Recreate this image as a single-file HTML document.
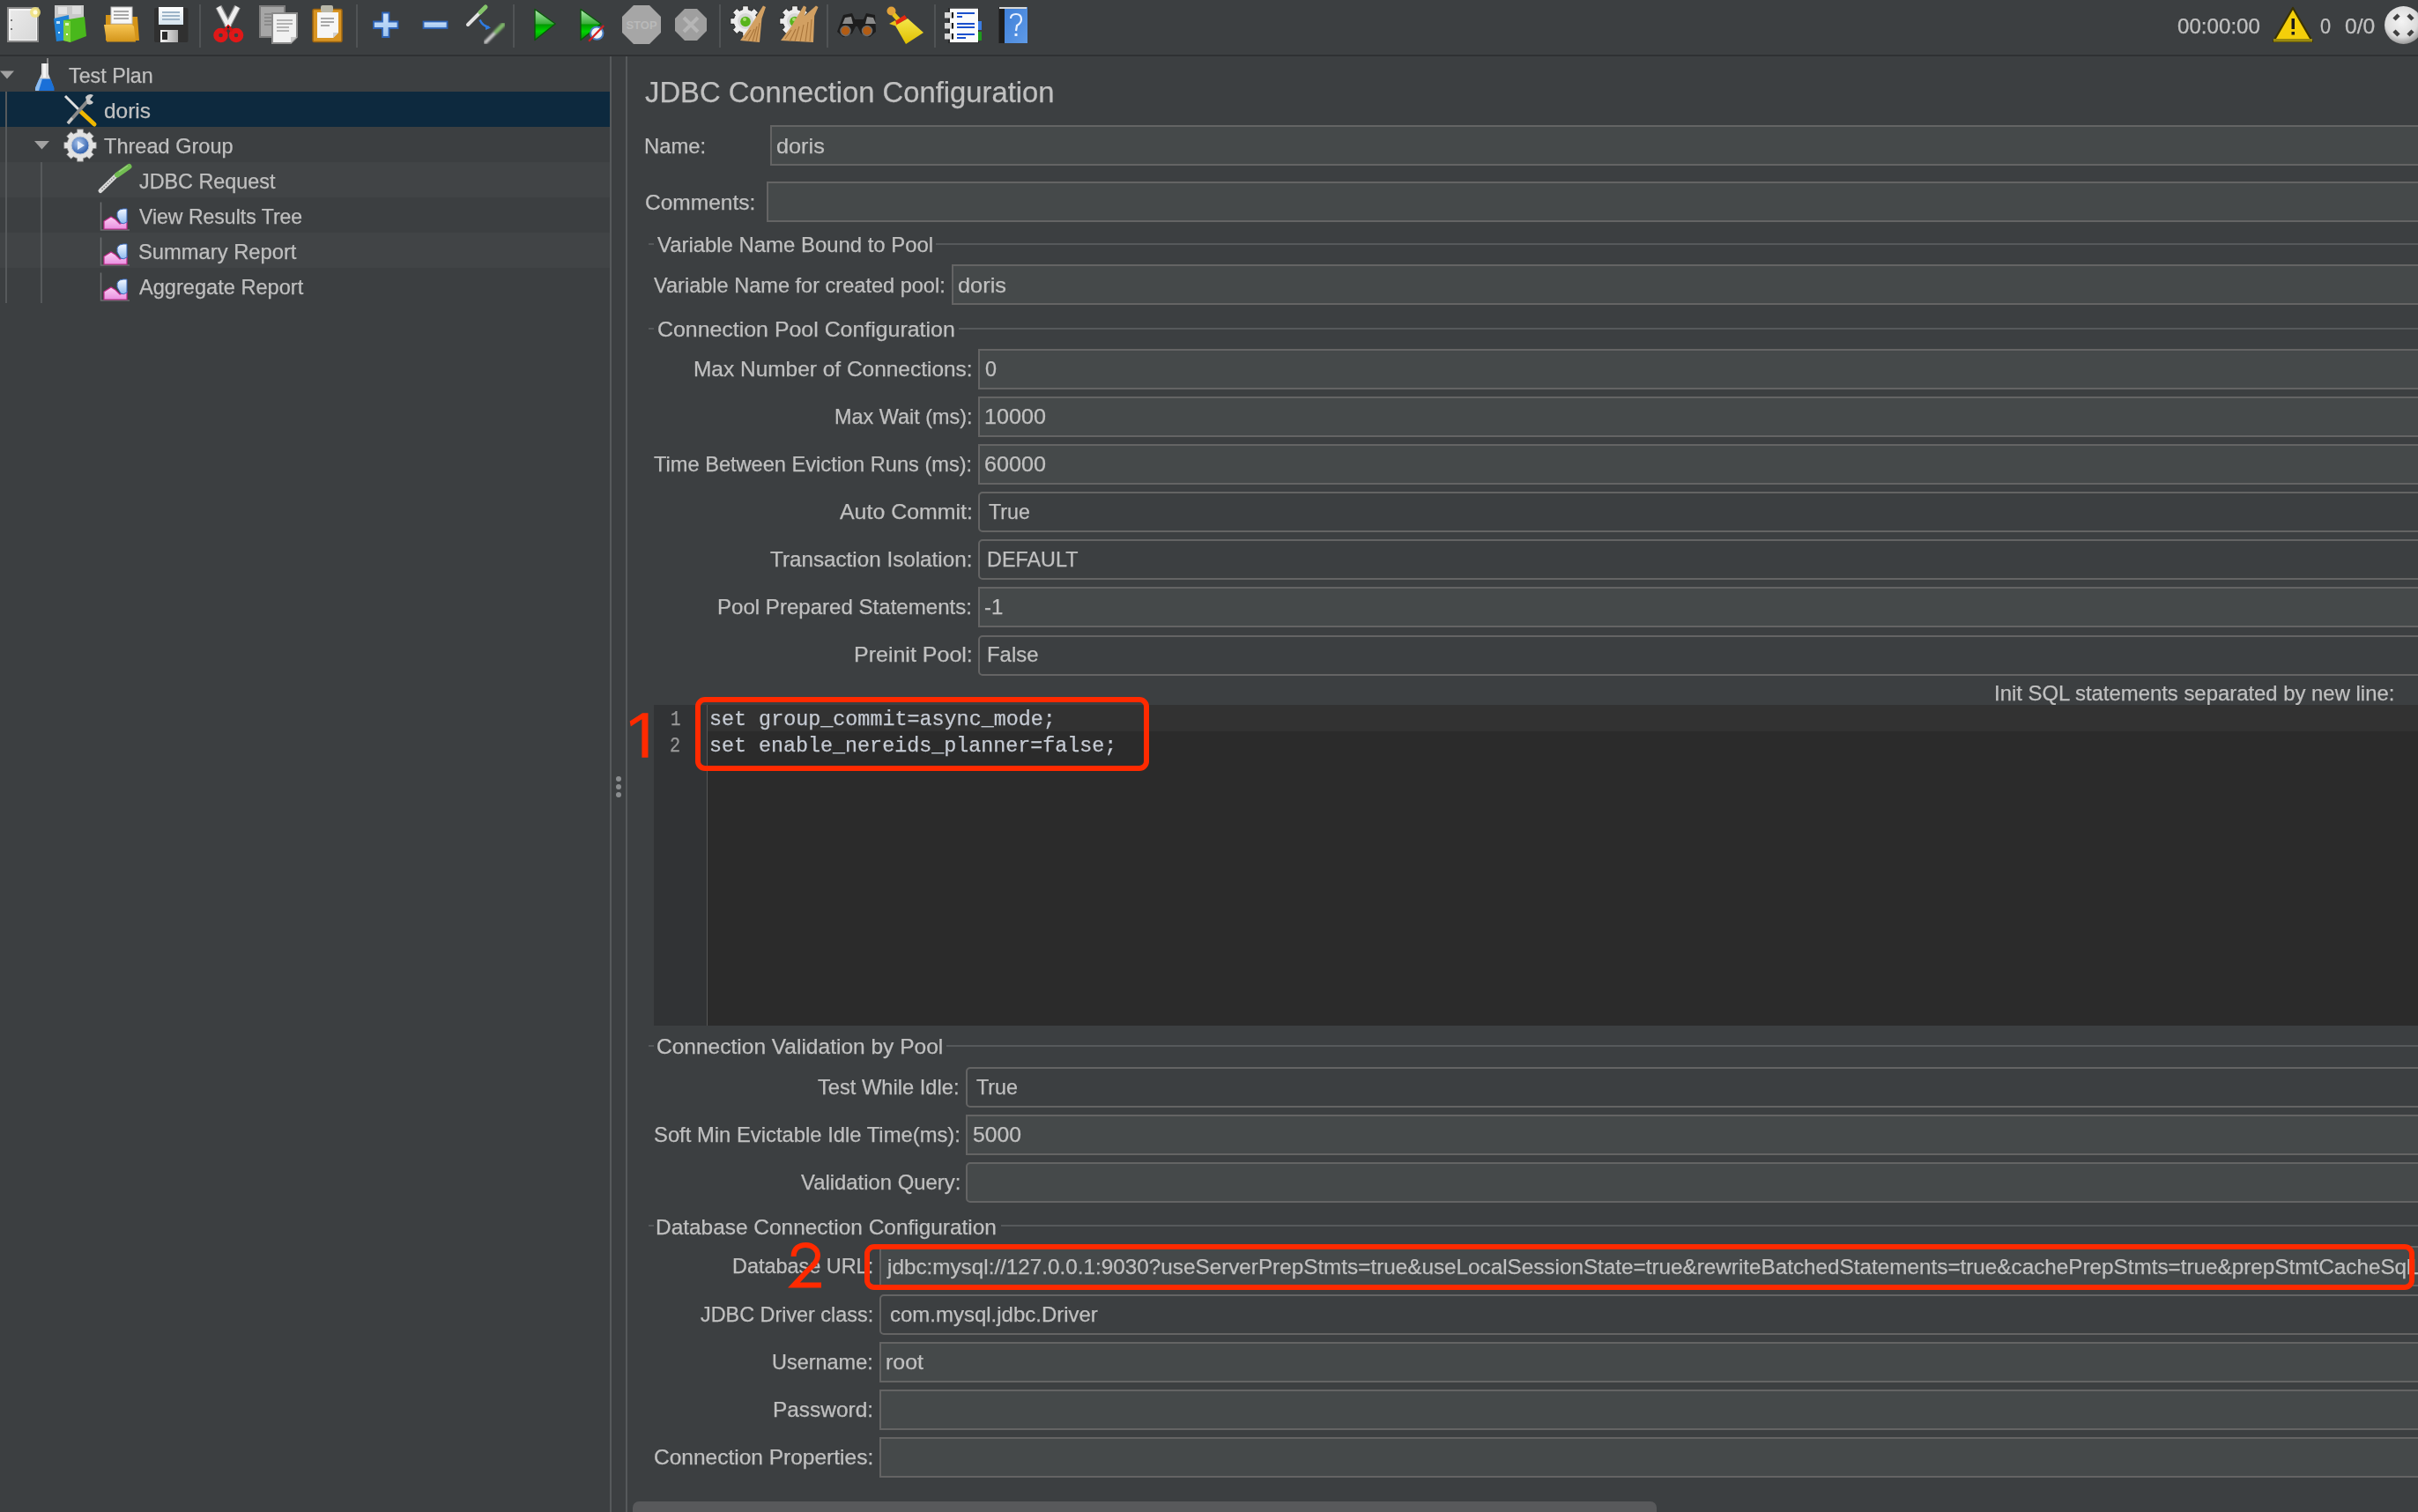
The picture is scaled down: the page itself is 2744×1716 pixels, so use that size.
<!DOCTYPE html>
<html><head><meta charset="utf-8"><style>
html,body{margin:0;padding:0;}
body{width:2744px;height:1716px;background:#3c3f41;overflow:hidden;position:relative;font-family:"Liberation Sans",sans-serif;}
.t{position:absolute;white-space:pre;-webkit-text-stroke:0.25px currentColor;}
.r{position:absolute;}
svg{position:absolute;overflow:visible;}
</style></head><body>
<div class="r" style="left:0px;top:62px;width:2744px;height:2px;background:#2f3133"></div><div class="r" style="left:226px;top:5px;width:2px;height:49px;background:#505355"></div><div class="r" style="left:404px;top:5px;width:2px;height:49px;background:#505355"></div><div class="r" style="left:582px;top:5px;width:2px;height:49px;background:#505355"></div><div class="r" style="left:816px;top:5px;width:2px;height:49px;background:#505355"></div><div class="r" style="left:938px;top:5px;width:2px;height:49px;background:#505355"></div><div class="r" style="left:1060px;top:5px;width:2px;height:49px;background:#505355"></div><div class="r" style="left:0px;top:104px;width:692px;height:40px;background:#0d293e"></div><div class="r" style="left:0px;top:184px;width:692px;height:40px;background:#414446"></div><div class="r" style="left:0px;top:264px;width:692px;height:40px;background:#414446"></div><div class="r" style="left:6px;top:104px;width:2px;height:240px;background:#56595b"></div><div class="r" style="left:46px;top:184px;width:2px;height:160px;background:#56595b"></div><div class="r" style="left:692px;top:64px;width:2px;height:1652px;background:#56595b"></div><div class="r" style="left:710px;top:64px;width:2px;height:1652px;background:#56595b"></div><div class="r" style="left:699px;top:881px;width:6px;height:6px;background:#8a8d8f;border-radius:3px"></div><div class="r" style="left:699px;top:890px;width:6px;height:6px;background:#8a8d8f;border-radius:3px"></div><div class="r" style="left:699px;top:899px;width:6px;height:6px;background:#8a8d8f;border-radius:3px"></div><div class="t" style="left:78.00px;top:74.06px;font-size:24.5px;line-height:24.5px;color:#c0c0c0;font-family:'Liberation Sans';transform:scaleX(0.9496);transform-origin:0 0;">Test Plan</div><div class="t" style="left:118.00px;top:114.06px;font-size:24.5px;line-height:24.5px;color:#c0c0c0;font-family:'Liberation Sans';transform:scaleX(0.9990);transform-origin:0 0;">doris</div><div class="t" style="left:118.00px;top:154.06px;font-size:24.5px;line-height:24.5px;color:#c0c0c0;font-family:'Liberation Sans';transform:scaleX(0.9612);transform-origin:0 0;">Thread Group</div><div class="t" style="left:158.10px;top:194.06px;font-size:24.5px;line-height:24.5px;color:#c0c0c0;font-family:'Liberation Sans';transform:scaleX(0.9530);transform-origin:0 0;">JDBC Request</div><div class="t" style="left:158.10px;top:234.06px;font-size:24.5px;line-height:24.5px;color:#c0c0c0;font-family:'Liberation Sans';transform:scaleX(0.9400);transform-origin:0 0;">View Results Tree</div><div class="t" style="left:157.13px;top:274.06px;font-size:24.5px;line-height:24.5px;color:#c0c0c0;font-family:'Liberation Sans';transform:scaleX(0.9688);transform-origin:0 0;">Summary Report</div><div class="t" style="left:158.10px;top:314.06px;font-size:24.5px;line-height:24.5px;color:#c0c0c0;font-family:'Liberation Sans';transform:scaleX(0.9628);transform-origin:0 0;">Aggregate Report</div><div class="t" style="left:732.00px;top:87.72px;font-size:33.4px;line-height:33.4px;color:#c0c0c0;font-family:'Liberation Sans';transform:scaleX(0.9815);transform-origin:0 0;">JDBC Connection Configuration</div><div class="t" style="left:731.05px;top:154.06px;font-size:24.5px;line-height:24.5px;color:#c0c0c0;font-family:'Liberation Sans';transform:scaleX(0.9729);transform-origin:0 0;">Name:</div><div class="r" style="left:874px;top:142px;width:1890px;height:42px;border:2px solid #646464;background:#45494a;"></div><div class="t" style="left:880.97px;top:154.06px;font-size:24.5px;line-height:24.5px;color:#c0c0c0;font-family:'Liberation Sans';transform:scaleX(1.0318);transform-origin:0 0;">doris</div><div class="t" style="left:732.00px;top:218.06px;font-size:24.5px;line-height:24.5px;color:#c0c0c0;font-family:'Liberation Sans';transform:scaleX(1.0013);transform-origin:0 0;">Comments:</div><div class="r" style="left:870px;top:206px;width:1894px;height:42px;border:2px solid #646464;background:#45494a;"></div><div class="r" style="left:736px;top:276px;width:6px;height:2px;background:#56595b"></div><div class="t" style="left:746.00px;top:265.56px;font-size:24.5px;line-height:24.5px;color:#c0c0c0;font-family:'Liberation Sans';transform:scaleX(0.9755);transform-origin:0 0;">Variable Name Bound to Pool</div><div class="r" style="left:1062px;top:276px;width:1682px;height:2px;background:#56595b"></div><div class="t" style="left:742.00px;top:312.06px;font-size:24.5px;line-height:24.5px;color:#c0c0c0;font-family:'Liberation Sans';transform:scaleX(0.9612);transform-origin:0 0;">Variable Name for created pool:</div><div class="r" style="left:1080px;top:300px;width:1684px;height:42px;border:2px solid #646464;background:#45494a;"></div><div class="t" style="left:1086.96px;top:311.66px;font-size:24.5px;line-height:24.5px;color:#c0c0c0;font-family:'Liberation Sans';transform:scaleX(1.0356);transform-origin:0 0;">doris</div><div class="r" style="left:736px;top:372px;width:6px;height:2px;background:#56595b"></div><div class="t" style="left:745.58px;top:362.06px;font-size:24.5px;line-height:24.5px;color:#c0c0c0;font-family:'Liberation Sans';transform:scaleX(1.0163);transform-origin:0 0;">Connection Pool Configuration</div><div class="r" style="left:1088px;top:372px;width:1656px;height:2px;background:#56595b"></div><div class="t" style="left:786.80px;top:406.96px;font-size:24.5px;line-height:24.5px;color:#c0c0c0;font-family:'Liberation Sans';transform:scaleX(0.9979);transform-origin:0 0;">Max Number of Connections:</div><div class="r" style="left:1110px;top:396px;width:1654px;height:42px;border:2px solid #646464;background:#45494a;"></div><div class="t" style="left:1118.30px;top:406.96px;font-size:24.5px;line-height:24.5px;color:#c0c0c0;font-family:'Liberation Sans';transform:scaleX(0.9538);transform-origin:0 0;">0</div><div class="t" style="left:946.89px;top:460.99px;font-size:24.5px;line-height:24.5px;color:#c0c0c0;font-family:'Liberation Sans';transform:scaleX(0.9552);transform-origin:0 0;">Max Wait (ms):</div><div class="r" style="left:1110px;top:450px;width:1654px;height:42px;border:2px solid #646464;background:#45494a;"></div><div class="t" style="left:1117.27px;top:460.99px;font-size:24.5px;line-height:24.5px;color:#c0c0c0;font-family:'Liberation Sans';transform:scaleX(1.0270);transform-origin:0 0;">10000</div><div class="t" style="left:742.20px;top:515.02px;font-size:24.5px;line-height:24.5px;color:#c0c0c0;font-family:'Liberation Sans';transform:scaleX(0.9634);transform-origin:0 0;">Time Between Eviction Runs (ms):</div><div class="r" style="left:1110px;top:504px;width:1654px;height:42px;border:2px solid #646464;background:#45494a;"></div><div class="t" style="left:1117.27px;top:515.02px;font-size:24.5px;line-height:24.5px;color:#c0c0c0;font-family:'Liberation Sans';transform:scaleX(1.0270);transform-origin:0 0;">60000</div><div class="t" style="left:952.60px;top:569.05px;font-size:24.5px;line-height:24.5px;color:#c0c0c0;font-family:'Liberation Sans';transform:scaleX(1.0164);transform-origin:0 0;">Auto Commit:</div><div class="r" style="left:1110px;top:558px;width:1654px;height:42px;border:2px solid #646464;background:#3c3f41;border-radius:5px 0 0 5px;"></div><div class="t" style="left:1122.30px;top:569.05px;font-size:24.5px;line-height:24.5px;color:#c0c0c0;font-family:'Liberation Sans';transform:scaleX(0.9480);transform-origin:0 0;">True</div><div class="t" style="left:874.00px;top:623.08px;font-size:24.5px;line-height:24.5px;color:#c0c0c0;font-family:'Liberation Sans';transform:scaleX(0.9889);transform-origin:0 0;">Transaction Isolation:</div><div class="r" style="left:1110px;top:612px;width:1654px;height:42px;border:2px solid #646464;background:#3c3f41;border-radius:5px 0 0 5px;"></div><div class="t" style="left:1120.39px;top:623.08px;font-size:24.5px;line-height:24.5px;color:#c0c0c0;font-family:'Liberation Sans';transform:scaleX(0.9541);transform-origin:0 0;">DEFAULT</div><div class="t" style="left:814.44px;top:677.11px;font-size:24.5px;line-height:24.5px;color:#c0c0c0;font-family:'Liberation Sans';transform:scaleX(0.9822);transform-origin:0 0;">Pool Prepared Statements:</div><div class="r" style="left:1110px;top:666px;width:1654px;height:42px;border:2px solid #646464;background:#45494a;"></div><div class="t" style="left:1117.32px;top:677.11px;font-size:24.5px;line-height:24.5px;color:#c0c0c0;font-family:'Liberation Sans';transform:scaleX(0.9772);transform-origin:0 0;">-1</div><div class="t" style="left:968.66px;top:731.14px;font-size:24.5px;line-height:24.5px;color:#c0c0c0;font-family:'Liberation Sans';transform:scaleX(1.0204);transform-origin:0 0;">Preinit Pool:</div><div class="r" style="left:1110px;top:721px;width:1654px;height:42px;border:2px solid #646464;background:#3c3f41;border-radius:5px 0 0 5px;"></div><div class="t" style="left:1120.35px;top:731.14px;font-size:24.5px;line-height:24.5px;color:#c0c0c0;font-family:'Liberation Sans';transform:scaleX(0.9758);transform-origin:0 0;">False</div><div class="t" style="left:2263.05px;top:774.66px;font-size:24.5px;line-height:24.5px;color:#c0c0c0;font-family:'Liberation Sans';transform:scaleX(0.9745);transform-origin:0 0;">Init SQL statements separated by new line:</div><div class="r" style="left:742px;top:800px;width:2002px;height:364px;background:#2b2b2b"></div><div class="r" style="left:742px;top:800px;width:60px;height:364px;background:#313335"></div><div class="r" style="left:803px;top:800px;width:1941px;height:30px;background:#323232"></div><div class="r" style="left:802px;top:800px;width:1px;height:364px;background:#555555"></div><div class="t" style="left:760.67px;top:806.30px;font-size:23.1px;line-height:23.1px;color:#999999;font-family:'Liberation Mono';transform:scaleX(0.8333);transform-origin:0 0;">1</div><div class="t" style="left:760.12px;top:836.30px;font-size:23.1px;line-height:23.1px;color:#999999;font-family:'Liberation Mono';transform:scaleX(0.8750);transform-origin:0 0;">2</div><div class="t" style="left:804.59px;top:806.30px;font-size:23.1px;line-height:23.1px;color:#c5cad3;font-family:'Liberation Mono';transform:scaleX(1.0124);transform-origin:0 0;">set group_commit=async_mode;</div><div class="t" style="left:804.59px;top:836.30px;font-size:23.1px;line-height:23.1px;color:#c5cad3;font-family:'Liberation Mono';transform:scaleX(1.0109);transform-origin:0 0;">set enable_nereids_planner=false;</div><div class="r" style="left:736px;top:1186px;width:6px;height:2px;background:#56595b"></div><div class="t" style="left:745.20px;top:1176.06px;font-size:24.5px;line-height:24.5px;color:#c0c0c0;font-family:'Liberation Sans';transform:scaleX(1.0005);transform-origin:0 0;">Connection Validation by Pool</div><div class="r" style="left:1074px;top:1186px;width:1670px;height:2px;background:#56595b"></div><div class="t" style="left:928.20px;top:1222.36px;font-size:24.5px;line-height:24.5px;color:#c0c0c0;font-family:'Liberation Sans';transform:scaleX(0.9665);transform-origin:0 0;">Test While Idle:</div><div class="r" style="left:1096px;top:1211px;width:1668px;height:42px;border:2px solid #646464;background:#3c3f41;border-radius:5px 0 0 5px;"></div><div class="t" style="left:1107.90px;top:1222.36px;font-size:24.5px;line-height:24.5px;color:#c0c0c0;font-family:'Liberation Sans';transform:scaleX(0.9500);transform-origin:0 0;">True</div><div class="t" style="left:741.63px;top:1276.36px;font-size:24.5px;line-height:24.5px;color:#c0c0c0;font-family:'Liberation Sans';transform:scaleX(0.9716);transform-origin:0 0;">Soft Min Evictable Idle Time(ms):</div><div class="r" style="left:1096px;top:1265px;width:1668px;height:42px;border:2px solid #646464;background:#45494a;"></div><div class="t" style="left:1104.20px;top:1276.36px;font-size:24.5px;line-height:24.5px;color:#c0c0c0;font-family:'Liberation Sans';transform:scaleX(1.0097);transform-origin:0 0;">5000</div><div class="t" style="left:908.70px;top:1330.36px;font-size:24.5px;line-height:24.5px;color:#c0c0c0;font-family:'Liberation Sans';transform:scaleX(0.9739);transform-origin:0 0;">Validation Query:</div><div class="r" style="left:1096px;top:1319px;width:1668px;height:42px;border:2px solid #646464;background:#45494a;border-radius:5px 0 0 5px;"></div><div class="r" style="left:736px;top:1390px;width:6px;height:2px;background:#56595b"></div><div class="t" style="left:744.21px;top:1381.06px;font-size:24.5px;line-height:24.5px;color:#c0c0c0;font-family:'Liberation Sans';transform:scaleX(0.9968);transform-origin:0 0;">Database Connection Configuration</div><div class="r" style="left:1136px;top:1390px;width:1608px;height:2px;background:#56595b"></div><div class="t" style="left:830.59px;top:1425.36px;font-size:24.5px;line-height:24.5px;color:#c0c0c0;font-family:'Liberation Sans';transform:scaleX(0.9560);transform-origin:0 0;">Database URL:</div><div class="r" style="left:998px;top:1414px;width:1766px;height:42px;border:2px solid #646464;background:#45494a;"></div><div class="t" style="left:794.60px;top:1480.36px;font-size:24.5px;line-height:24.5px;color:#c0c0c0;font-family:'Liberation Sans';transform:scaleX(0.9542);transform-origin:0 0;">JDBC Driver class:</div><div class="r" style="left:998px;top:1469px;width:1766px;height:42px;border:2px solid #646464;background:#3c3f41;border-radius:5px 0 0 5px;"></div><div class="t" style="left:1009.62px;top:1480.36px;font-size:24.5px;line-height:24.5px;color:#c0c0c0;font-family:'Liberation Sans';transform:scaleX(0.9787);transform-origin:0 0;">com.mysql.jdbc.Driver</div><div class="t" style="left:876.04px;top:1534.36px;font-size:24.5px;line-height:24.5px;color:#c0c0c0;font-family:'Liberation Sans';transform:scaleX(0.9572);transform-origin:0 0;">Username:</div><div class="r" style="left:998px;top:1523px;width:1766px;height:42px;border:2px solid #646464;background:#45494a;"></div><div class="t" style="left:1005.38px;top:1534.36px;font-size:24.5px;line-height:24.5px;color:#c0c0c0;font-family:'Liberation Sans';transform:scaleX(1.0167);transform-origin:0 0;">root</div><div class="t" style="left:876.81px;top:1588.36px;font-size:24.5px;line-height:24.5px;color:#c0c0c0;font-family:'Liberation Sans';transform:scaleX(0.9967);transform-origin:0 0;">Password:</div><div class="r" style="left:998px;top:1577px;width:1766px;height:42px;border:2px solid #646464;background:#45494a;"></div><div class="t" style="left:741.60px;top:1642.36px;font-size:24.5px;line-height:24.5px;color:#c0c0c0;font-family:'Liberation Sans';transform:scaleX(0.9999);transform-origin:0 0;">Connection Properties:</div><div class="r" style="left:998px;top:1631px;width:1766px;height:42px;border:2px solid #646464;background:#45494a;"></div><div class="t" style="left:1007.39px;top:1425.86px;font-size:24.5px;line-height:24.5px;color:#c0c0c0;font-family:'Liberation Sans';transform:scaleX(0.9906);transform-origin:0 0;">jdbc:mysql://127.0.0.1:9030?useServerPrepStmts=true&amp;useLocalSessionState=true&amp;rewriteBatchedStatements=true&amp;cachePrepStmts=true&amp;prepStmtCacheSql</div><div class="t" style="left:2735.60px;top:1425.86px;font-size:24.5px;line-height:24.5px;color:#c0c0c0;font-family:'Liberation Sans';transform:scaleX(1.0000);transform-origin:0 0;">Limit=99999</div><div class="r" style="left:718px;top:1704px;width:1161.5px;height:30px;background:#58595b;border-radius:7px"></div><div class="r" style="left:789px;top:790.6px;width:503.3px;height:72px;border:6px solid #ff2a00;border-radius:11px"></div><div class="r" style="left:981.4px;top:1411.5px;width:1747px;height:40.2px;border:6px solid #ff2a00;border-radius:11px"></div><svg width="2744" height="1716" style="left:0;top:0"><path d="M735.5,809.2 L735.5,859.8 L728.4,859.8 L728.4,816.3 L715.8,824.5 L714.7,818.5 L729.1,809.2 Z" fill="#ff2a00"/><path d="M900.6,1426 C900.6,1417 906.5,1413 914.5,1413 C922.5,1413 928,1418.5 928,1425 C928,1431 924,1435.5 917.5,1441 L901,1458.5 L932,1458.5" fill="none" stroke="#ff2a00" stroke-width="6"/></svg><div class="t" style="left:2470.80px;top:18.08px;font-size:24px;line-height:24px;color:#c0c0c0;font-family:'Liberation Sans';transform:scaleX(1.0056);transform-origin:0 0;">00:00:00</div><div class="t" style="left:2633.00px;top:18.08px;font-size:24px;line-height:24px;color:#c0c0c0;font-family:'Liberation Sans';transform:scaleX(0.9077);transform-origin:0 0;">0</div><div class="t" style="left:2660.60px;top:18.08px;font-size:24px;line-height:24px;color:#c0c0c0;font-family:'Liberation Sans';transform:scaleX(1.0268);transform-origin:0 0;">0/0</div>
<svg width="2744" height="400" viewBox="0 0 2744 400" style="left:0;top:0">
<defs>
<linearGradient id="gNew" x1="0" y1="0" x2="1" y2="1"><stop offset="0" stop-color="#e9e9e9"/><stop offset="1" stop-color="#d9d9d9"/></linearGradient>
<linearGradient id="gFold" x1="0" y1="0" x2="0" y2="1"><stop offset="0" stop-color="#f6c453"/><stop offset="1" stop-color="#d3951a"/></linearGradient>
<linearGradient id="gPlay" x1="0" y1="0" x2="0" y2="1"><stop offset="0.05" stop-color="#a6e6a6"/><stop offset="0.47" stop-color="#3aae3a"/><stop offset="0.5" stop-color="#009a00"/><stop offset="0.72" stop-color="#00d400"/><stop offset="1" stop-color="#0a8a0a"/></linearGradient>
<linearGradient id="gBlue" x1="0" y1="0" x2="0" y2="1"><stop offset="0" stop-color="#cfe3fb"/><stop offset="1" stop-color="#9cc3f0"/></linearGradient>
<linearGradient id="gFloppy" x1="0" y1="0" x2="0" y2="1"><stop offset="0" stop-color="#ffffff"/><stop offset="1" stop-color="#d6e4ee"/></linearGradient>
<linearGradient id="gShut" x1="0" y1="0" x2="1" y2="0"><stop offset="0" stop-color="#f4f4f4"/><stop offset="1" stop-color="#a8a8a8"/></linearGradient>
<linearGradient id="gBroom" x1="0" y1="0" x2="0" y2="1"><stop offset="0" stop-color="#f5e64a"/><stop offset="1" stop-color="#e0c000"/></linearGradient>
<linearGradient id="gHelp" x1="0" y1="0" x2="1" y2="1"><stop offset="0" stop-color="#3e7fd8"/><stop offset="1" stop-color="#5f9ae6"/></linearGradient>
<radialGradient id="gBall" cx="0.45" cy="0.4" r="0.6"><stop offset="0" stop-color="#f4f4f4"/><stop offset="0.7" stop-color="#dcdcdc"/><stop offset="1" stop-color="#9a9a9a"/></radialGradient>
<radialGradient id="gGearBlue" cx="0.4" cy="0.35" r="0.7"><stop offset="0" stop-color="#a9c4ea"/><stop offset="1" stop-color="#2456a8"/></radialGradient>
<linearGradient id="gPink" x1="0" y1="0" x2="0" y2="1"><stop offset="0" stop-color="#fbd0f4"/><stop offset="1" stop-color="#e98fe0"/></linearGradient>
<linearGradient id="gBar" x1="0" y1="0" x2="0" y2="1"><stop offset="0" stop-color="#f4f8ff"/><stop offset="1" stop-color="#8fbaf0"/></linearGradient>
<filter id="blur1"><feGaussianBlur stdDeviation="1.2"/></filter>
</defs>

<!-- 1 New -->
<rect x="9" y="9" width="34" height="38" fill="#f6f6f6" stroke="#8a8a8a" stroke-width="2"/>
<rect x="12" y="12" width="29" height="33" fill="url(#gNew)"/>
<rect x="12" y="22" width="2" height="2" fill="#777"/><rect x="12" y="32" width="2" height="2" fill="#777"/>
<circle cx="40" cy="14" r="6" fill="#f3e37a" opacity="0.85"/><circle cx="40" cy="14" r="2.5" fill="#fffbe0"/>

<!-- 2 Templates -->
<rect x="62" y="6" width="33" height="20" fill="#c9c9c9"/>
<rect x="66" y="8" width="10" height="8" fill="#e3e3e3"/><rect x="82" y="7" width="10" height="9" fill="#dcdcdc"/>
<path d="M61,21 L78,17 L80,45 L64,47 Z" fill="#1f82d6"/>
<rect x="64" y="24" width="4" height="3" fill="#bfe0f8"/><rect x="66" y="36" width="2" height="2" fill="#d0ecff"/>
<path d="M72,23 L96,19 L98,41 L80,48 L72,46 Z" fill="#49b81c"/>
<path d="M72,23 L80,24 L80,48 L72,46 Z" fill="#7fd33a"/>
<rect x="74" y="26" width="4" height="3" fill="#d8f5c0"/><rect x="75" y="38" width="2" height="2" fill="#fff"/>

<!-- 3 Open -->
<path d="M120,17 L133,17 L135,19 L156,19 L158,46 L120,46 Z" fill="#d49418"/>
<rect x="126" y="8" width="24" height="19" fill="#f7f7f7" stroke="#bdbdbd" stroke-width="1"/>
<rect x="129" y="12" width="17" height="2" fill="#a8a8a8"/><rect x="129" y="16" width="17" height="2" fill="#a8a8a8"/><rect x="129" y="20" width="17" height="2" fill="#a8a8a8"/>
<path d="M118,28 L150,28 L152,30 L154,47.5 L121,47.5 Z" fill="url(#gFold)"/>

<!-- 4 Save -->
<rect x="175" y="9" width="38.5" height="39" rx="2" fill="#303030"/>
<rect x="180" y="8" width="28" height="20" fill="url(#gFloppy)"/>
<rect x="184" y="13" width="20" height="2" fill="#9db4c8"/><rect x="184" y="17" width="20" height="2" fill="#9db4c8"/><rect x="184" y="21" width="20" height="2" fill="#9db4c8"/>
<rect x="182" y="34" width="20" height="14" fill="url(#gShut)"/>
<rect x="184" y="36" width="6" height="9" fill="#2a2a2a"/>

<!-- 5 Cut -->
<path d="M248,7.5 L260,31" stroke="#8f8f8f" stroke-width="7.5" stroke-linecap="butt"/>
<path d="M269.5,7.5 L257.5,31" stroke="#8f8f8f" stroke-width="7.5" stroke-linecap="butt"/>
<path d="M248,8 L260,31" stroke="#eeeeee" stroke-width="5"/>
<path d="M269.5,8 L257.5,31" stroke="#eeeeee" stroke-width="5"/>
<circle cx="250.5" cy="40" r="5.3" fill="#3c3f41" stroke="#e01818" stroke-width="6"/>
<circle cx="268" cy="40" r="5.3" fill="#3c3f41" stroke="#e01818" stroke-width="6"/>
<path d="M254.5,35 L259,30 L263.5,35" stroke="#d41414" stroke-width="3.5" fill="none"/>
<circle cx="259" cy="31" r="1.2" fill="#222"/>
<!-- 6 Copy -->
<rect x="295" y="7" width="28" height="35" fill="#a6a6a6" stroke="#7c7c7c" stroke-width="2"/>
<rect x="300" y="15" width="12" height="2" fill="#8a8a8a"/><rect x="300" y="19" width="12" height="2" fill="#8a8a8a"/><rect x="300" y="23" width="12" height="2" fill="#8a8a8a"/><rect x="300" y="27" width="12" height="2" fill="#8a8a8a"/>
<path d="M309,15 L337,15 L337,42 L330,49 L309,49 Z" fill="#f1f1f1" stroke="#8a8a8a" stroke-width="2"/>
<path d="M330,49 L330,42 L337,42 Z" fill="#c8c8c8"/>
<rect x="314" y="22" width="18" height="2" fill="#b4b4b4"/><rect x="314" y="26" width="18" height="2" fill="#b4b4b4"/><rect x="314" y="30" width="14" height="2" fill="#b4b4b4"/><rect x="314" y="34" width="14" height="2" fill="#b4b4b4"/>

<!-- 7 Paste -->
<rect x="355" y="10.5" width="33" height="37" rx="1.5" fill="#d89422" stroke="#9c6410" stroke-width="1.5"/>
<path d="M360,14 L384,14 L384,37 L378,43 L360,43 Z" fill="#f6f6f6"/>
<path d="M378,43 L378,37 L384,37 Z" fill="#d0d0d0"/>
<rect x="364" y="6" width="14" height="8" rx="2" fill="#b9b7a8"/>
<rect x="364" y="20" width="15" height="2" fill="#a8a8a8"/><rect x="364" y="24" width="15" height="2" fill="#a8a8a8"/><rect x="364" y="28" width="10" height="2" fill="#a8a8a8"/>

<!-- 8 Plus -->
<path d="M434,14.5 h7.5 v10 h10 v7.5 h-10 v10 h-7.5 v-10 h-10 v-7.5 h10 z" fill="url(#gBlue)" stroke="#2e64b8" stroke-width="1.8"/>

<!-- 9 Minus -->
<rect x="480.5" y="24.5" width="27" height="7.5" fill="url(#gBlue)" stroke="#2e64b8" stroke-width="1.8"/>

<!-- 10 Toggle -->
<path d="M531,28 L545,14" stroke="#e2e2e2" stroke-width="4" stroke-linecap="round"/>
<path d="M545,14 L551,8" stroke="#84c46a" stroke-width="5" stroke-linecap="round"/>
<path d="M544.5,22.5 Q548,30 555,31" stroke="#2f7be0" stroke-width="2.5" fill="none"/>
<path d="M551,28 L557,31.5 L551,34 Z" fill="#2f7be0"/>
<g filter="url(#blur1)"><path d="M551,48 L563,36" stroke="#c8c8c8" stroke-width="4" stroke-linecap="round"/><path d="M563,36 L571,28" stroke="#7fb86a" stroke-width="5" stroke-linecap="round"/></g>

<!-- 11 Play -->
<path d="M607,10.5 L630.2,27 L607,45.5 Z" fill="url(#gPlay)" stroke="#0a560a" stroke-width="1.4" stroke-linejoin="round"/>

<!-- 12 Play no timers -->
<path d="M659,10.5 L682,27 L659,45.5 Z" fill="url(#gPlay)" stroke="#0a560a" stroke-width="1.4" stroke-linejoin="round"/>
<circle cx="677.3" cy="37.6" r="7.2" fill="#eef3f8" stroke="#4a7fc4" stroke-width="2"/>
<path d="M668.2,46.7 L685.2,28.9" stroke="#d42020" stroke-width="2.2"/>

<!-- 13 Stop -->
<path d="M719,6 L737,6 L750,19 L750,37 L737,50 L719,50 L706,37 L706,19 Z" fill="#a6a6a6"/>
<text x="728" y="33" font-family="Liberation Sans" font-weight="bold" font-size="13" fill="#b9b9b9" text-anchor="middle">STOP</text>

<!-- 14 Shutdown -->
<path d="M777,10 L791,10 L802,21 L802,35 L791,46 L777,46 L766,35 L766,21 Z" fill="#9f9f9f"/>
<path d="M776,20 L792,36 M792,20 L776,36" stroke="#b6b6b6" stroke-width="4"/>

<!-- 15 Clear -->
<path d="M840.8,11.5 L842.7,10.9 L842.7,6.8 L849.3,6.8 L849.3,10.9 L851.2,11.5 L853.0,12.4 L855.8,9.5 L860.5,14.2 L857.6,17.0 L858.5,18.8 L859.1,20.7 L863.2,20.7 L863.2,27.3 L859.1,27.3 L858.5,29.2 L857.6,31.0 L860.5,33.8 L855.8,38.5 L853.0,35.6 L851.2,36.5 L849.3,37.1 L849.3,41.2 L842.7,41.2 L842.7,37.1 L840.8,36.5 L839.0,35.6 L836.2,38.5 L831.5,33.8 L834.4,31.0 L833.5,29.2 L832.9,27.3 L828.8,27.3 L828.8,20.7 L832.9,20.7 L833.5,18.8 L834.4,17.0 L831.5,14.2 L836.2,9.5 L839.0,12.4 Z" fill="#ececec" stroke="#111" stroke-width="0.8"/>
<circle cx="846" cy="24" r="9" fill="#d6d6d6"/>
<circle cx="846" cy="24.5" r="5.8" fill="#58b41c"/><circle cx="845" cy="22" r="2" fill="#a8dc70"/>
<path d="M840,46 L852,29 L866,6.5 L869,8 L864.5,21 L862,48 Z" fill="#d2a062"/>
<path d="M845,44 L852,34 M849,47 L856,33 M854,47 L859,30 M858,47 L862,26" stroke="#a8743a" stroke-width="1.1"/>
<!-- 16 Clear all -->
<path d="M896.8,11.5 L898.7,10.9 L898.7,6.8 L905.3,6.8 L905.3,10.9 L907.2,11.5 L909.0,12.4 L911.8,9.5 L916.5,14.2 L913.6,17.0 L914.5,18.8 L915.1,20.7 L919.2,20.7 L919.2,27.3 L915.1,27.3 L914.5,29.2 L913.6,31.0 L916.5,33.8 L911.8,38.5 L909.0,35.6 L907.2,36.5 L905.3,37.1 L905.3,41.2 L898.7,41.2 L898.7,37.1 L896.8,36.5 L895.0,35.6 L892.2,38.5 L887.5,33.8 L890.4,31.0 L889.5,29.2 L888.9,27.3 L884.8,27.3 L884.8,20.7 L888.9,20.7 L889.5,18.8 L890.4,17.0 L887.5,14.2 L892.2,9.5 L895.0,12.4 Z" fill="#ececec" stroke="#111" stroke-width="0.8"/>
<circle cx="902" cy="24" r="9" fill="#d6d6d6"/>
<circle cx="902" cy="24.5" r="5.8" fill="#58b41c"/><circle cx="901" cy="22" r="2" fill="#a8dc70"/>
<path d="M886,46 L898,30 L912,6.5 L915,8 L913,18 L926,6.5 L928.5,8 L924.2,18 L923,48 Z" fill="#d2a062"/>
<path d="M891,44 L898,34 M896,47 L903,33 M902,47 L907,30 M908,47 L912,28 M914,47 L917,25 M919,47 L921,22" stroke="#a8743a" stroke-width="1.1"/>
<!-- 17 Binoculars -->
<path d="M957,17 L967,15 L970,22 L980,22 L983,15 L993,17 L994,36 L987,42 L977,38 L973,30 L971,30 L967,38 L957,42 L950,36 Z" fill="#1d1d1d"/>
<path d="M959,20 L966,19 L968,27 L956,27 Z" fill="#8a8a8a"/><path d="M984,19 L991,20 L994,27 L982,27 Z" fill="#8a8a8a"/>
<circle cx="959.5" cy="35" r="5.5" fill="#b25c14" stroke="#6a6a6a" stroke-width="1.5"/>
<circle cx="984" cy="35" r="5.5" fill="#b25c14" stroke="#6a6a6a" stroke-width="1.5"/>

<!-- 18 Broom -->
<circle cx="1011.5" cy="12.5" r="5" fill="#e2a23a"/>
<path d="M1014,16 L1022,25" stroke="#e8c21a" stroke-width="5"/>
<path d="M1016,27 L1028,19" stroke="#e32a10" stroke-width="5"/>
<path d="M1016,29 L1030,21 L1048,37 L1028,50 Z" fill="url(#gBroom)"/>
<path d="M1009,27 L1016,23 L1018,30 Z" fill="#e8c21a"/>

<!-- 19 Function helper -->
<rect x="1076" y="9" width="35" height="40" fill="#1b1b1b" opacity="0.6"/>
<rect x="1078" y="9.7" width="32" height="38.4" fill="#fbfbfb"/>
<rect x="1072" y="14" width="10" height="6.5" fill="#d8d8d8"/><rect x="1080" y="14" width="2" height="6.5" fill="#111"/>
<rect x="1072" y="26" width="10" height="6.5" fill="#d8d8d8"/><rect x="1080" y="26" width="2" height="6.5" fill="#111"/>
<rect x="1072" y="38" width="10" height="6.5" fill="#d8d8d8"/><rect x="1080" y="38" width="2" height="6.5" fill="#111"/>
<rect x="1086" y="14" width="20" height="2" fill="#1a4fcc"/><rect x="1086" y="18" width="6" height="2" fill="#1a4fcc"/>
<rect x="1086" y="26" width="20" height="2" fill="#1a4fcc"/><rect x="1086" y="30" width="20" height="2" fill="#1a4fcc"/>
<rect x="1086" y="38" width="20" height="2" fill="#1a4fcc"/><rect x="1086" y="42" width="10" height="2" fill="#1a4fcc"/>
<rect x="1110" y="24" width="4" height="10" fill="#3a7be0"/><rect x="1110" y="36" width="4" height="10" fill="#1e9a1e"/>

<!-- 20 Help -->
<rect x="1133.5" y="8" width="7" height="41" fill="#1e1e1e"/>
<rect x="1140" y="8" width="26" height="41" fill="url(#gHelp)"/>
<rect x="1134" y="8" width="31" height="2" fill="#d8d8d8"/>
<path d="M1147,21 Q1147,16 1153,16 Q1159,16 1159,22 Q1159,26 1154,29 L1153,35" stroke="#e8f0ff" stroke-width="2.2" fill="none"/>
<rect x="1151.5" y="38" width="3" height="3" fill="#e8f0ff"/>

<!-- separators handled in html -->

<!-- Status: warning -->
<path d="M2602,9 L2624,47 L2580,47 Z" fill="#f4cf0a" stroke="#3a3200" stroke-width="2.2" stroke-linejoin="round"/>
<rect x="2580" y="44" width="44" height="3.5" fill="#9a8a10"/>
<rect x="2600.5" y="21" width="3.5" height="12" fill="#1a1a1a"/><rect x="2600.5" y="36" width="3.5" height="3.5" fill="#1a1a1a"/>

<!-- Status: ball -->
<circle cx="2727.5" cy="28.5" r="21.5" fill="url(#gBall)"/>
<path d="M2717,22 L2722,17 M2738,22 L2733,17 M2717,35 L2722,40 M2738,35 L2733,40" stroke="#3f3f3f" stroke-width="4.5"/>

<!-- ===== tree ===== -->
<path d="M0,80.5 L16,80.5 L8,89.5 Z" fill="#a2a2a2"/>
<path d="M39,160 L56,160 L47.5,169.5 Z" fill="#a2a2a2"/>
<!-- flask -->
<rect x="53" y="66" width="2" height="6" fill="#8a8a8a"/>
<path d="M47,72 L55,72 L55,84 L61,100 L61,103 L40,103 L40,100 L47,84 Z" fill="#d9d9d9"/>
<path d="M49,72 L52,72 L52,88 L49,88 Z" fill="#f4f4f4"/>
<path d="M44.5,89.5 L57.5,89.5 L61.5,100 L61.5,103 L40,103 L40,100 Z" fill="#1a70d8"/>
<path d="M44.5,89.5 L48,89.5 L44,103 L40,103 L40,100 Z" fill="#8cbcf0"/>
<!-- doris tools -->
<path d="M74,109 L92,127" stroke="#e0e0e0" stroke-width="3"/>
<path d="M92,127 L107,141" stroke="#f0b800" stroke-width="5" stroke-linecap="round"/>
<path d="M100,114 L77,140" stroke="#8a8a8a" stroke-width="4"/>
<path d="M77,140 L82,134" stroke="#c8c8c8" stroke-width="3"/>
<path d="M97,110 Q101,105 106,108 L102,113 L106,116 Q104,120 99,118 Z" fill="#c9c9c9"/>
<!-- gear -->
<path d="M85.3,151.1 L87.4,150.4 L87.5,146.8 L94.5,146.8 L94.6,150.4 L96.7,151.1 L98.7,152.1 L101.3,149.7 L106.3,154.7 L103.9,157.3 L104.9,159.3 L105.6,161.4 L109.2,161.5 L109.2,168.5 L105.6,168.6 L104.9,170.7 L103.9,172.7 L106.3,175.3 L101.3,180.3 L98.7,177.9 L96.7,178.9 L94.6,179.6 L94.5,183.2 L87.5,183.2 L87.4,179.6 L85.3,178.9 L83.3,177.9 L80.7,180.3 L75.7,175.3 L78.1,172.7 L77.1,170.7 L76.4,168.6 L72.8,168.5 L72.8,161.5 L76.4,161.4 L77.1,159.3 L78.1,157.3 L75.7,154.7 L80.7,149.7 L83.3,152.1 Z" fill="#e2e2e2" stroke="#8a8a8a" stroke-width="0.8"/>
<circle cx="91" cy="165" r="10" fill="url(#gGearBlue)" stroke="#c0c8d4" stroke-width="1"/>
<path d="M88,160 L96,165 L88,170 Z" fill="#e4ecf8"/>
<!-- pipette -->
<path d="M114,216.5 L132,199" stroke="#d9d9d9" stroke-width="5" stroke-linecap="round"/>
<path d="M115.5,215 L131,200" stroke="#7a7a7a" stroke-width="1.3" stroke-dasharray="1.5,1.5"/>
<path d="M133,198.5 L146.5,189" stroke="#72bd52" stroke-width="6" stroke-linecap="round"/>
<path d="M135,195 L145,188" stroke="#9ad27e" stroke-width="1.5"/>
<!-- charts -->
<g>
<path d="M114.5,229.5 L114.5,261 L147,261" stroke="#6b6e70" stroke-width="1.5" fill="none"/>
<path d="M118,260 L118,251 L126,246 L131,249 L136,254 L144,251 L144,260 Z" fill="url(#gPink)" stroke="#c02a8a" stroke-width="1.2"/>
<path d="M133,241 Q135,237 140,237 L144,237 L144,252 Q140,255 137,253 L133,246 Z" fill="url(#gBar)" stroke="#3a6cc0" stroke-width="1"/>
</g>
<g transform="translate(0,40)">
<path d="M114.5,229.5 L114.5,261 L147,261" stroke="#6b6e70" stroke-width="1.5" fill="none"/>
<path d="M118,260 L118,251 L126,246 L131,249 L136,254 L144,251 L144,260 Z" fill="url(#gPink)" stroke="#c02a8a" stroke-width="1.2"/>
<path d="M133,241 Q135,237 140,237 L144,237 L144,252 Q140,255 137,253 L133,246 Z" fill="url(#gBar)" stroke="#3a6cc0" stroke-width="1"/>
</g>
<g transform="translate(0,80)">
<path d="M114.5,229.5 L114.5,261 L147,261" stroke="#6b6e70" stroke-width="1.5" fill="none"/>
<path d="M118,260 L118,251 L126,246 L131,249 L136,254 L144,251 L144,260 Z" fill="url(#gPink)" stroke="#c02a8a" stroke-width="1.2"/>
<path d="M133,241 Q135,237 140,237 L144,237 L144,252 Q140,255 137,253 L133,246 Z" fill="url(#gBar)" stroke="#3a6cc0" stroke-width="1"/>
</g>
</svg>

</body></html>
